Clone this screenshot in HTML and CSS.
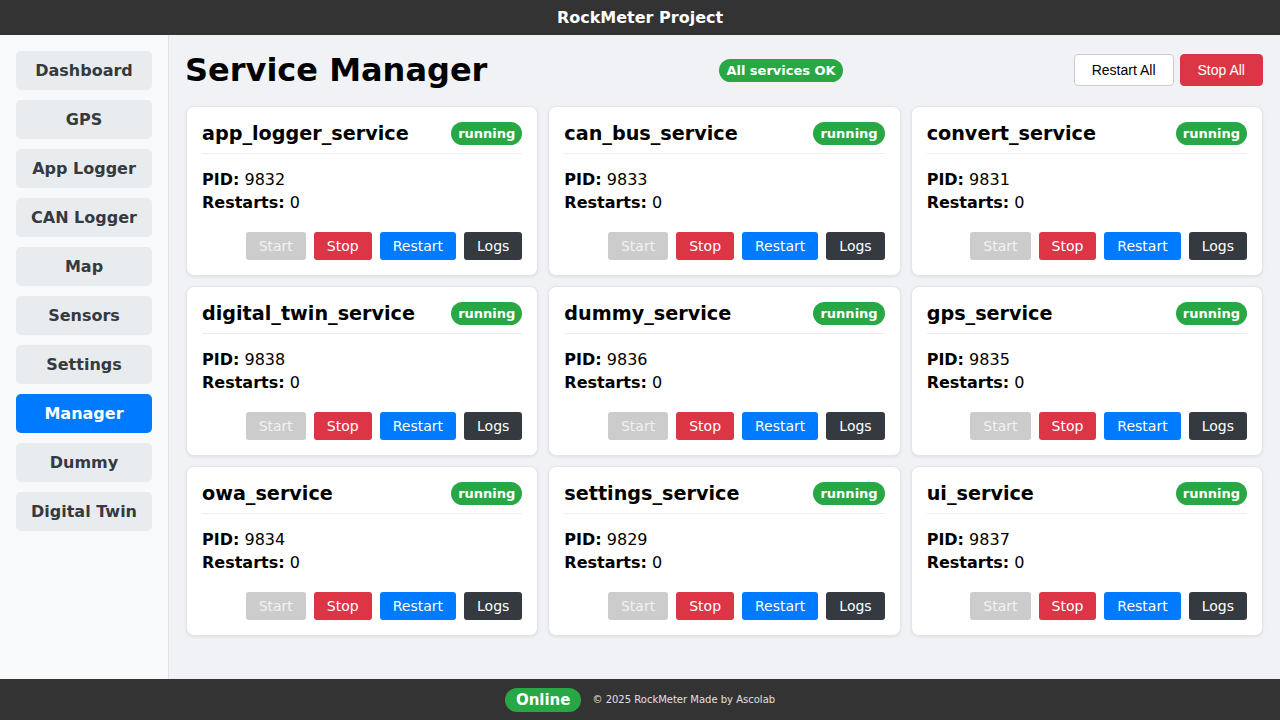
FILE: index.html
```html
<!DOCTYPE html>
<html lang="en">
<head>
<meta charset="utf-8">
<title>RockMeter Project</title>
<link rel="stylesheet" href="styles.css">
</head>
<body>
<header class="topbar">RockMeter Project</header>
<div class="layout">
  <nav class="sidebar">
    <button class="nav-btn">Dashboard</button>
    <button class="nav-btn">GPS</button>
    <button class="nav-btn">App Logger</button>
    <button class="nav-btn">CAN Logger</button>
    <button class="nav-btn">Map</button>
    <button class="nav-btn">Sensors</button>
    <button class="nav-btn">Settings</button>
    <button class="nav-btn active">Manager</button>
    <button class="nav-btn">Dummy</button>
    <button class="nav-btn">Digital Twin</button>
  </nav>
  <main class="main">
    <div class="page-head">
      <h1 class="page-title">Service Manager</h1>
      <span class="pill ok">All services OK</span>
      <div class="head-actions">
        <button class="hbtn light">Restart All</button>
        <button class="hbtn danger">Stop All</button>
      </div>
    </div>
    <div class="grid">
      <div class="card">
        <div class="card-head"><h3 class="card-title">app_logger_service</h3><span class="pill run">running</span></div>
        <div class="card-body"><div><b>PID:</b> 9832</div><div><b>Restarts:</b> 0</div></div>
        <div class="actions"><button class="abtn start">Start</button><button class="abtn stop">Stop</button><button class="abtn restart">Restart</button><button class="abtn logs">Logs</button></div>
      </div>
      <div class="card">
        <div class="card-head"><h3 class="card-title">can_bus_service</h3><span class="pill run">running</span></div>
        <div class="card-body"><div><b>PID:</b> 9833</div><div><b>Restarts:</b> 0</div></div>
        <div class="actions"><button class="abtn start">Start</button><button class="abtn stop">Stop</button><button class="abtn restart">Restart</button><button class="abtn logs">Logs</button></div>
      </div>
      <div class="card">
        <div class="card-head"><h3 class="card-title">convert_service</h3><span class="pill run">running</span></div>
        <div class="card-body"><div><b>PID:</b> 9831</div><div><b>Restarts:</b> 0</div></div>
        <div class="actions"><button class="abtn start">Start</button><button class="abtn stop">Stop</button><button class="abtn restart">Restart</button><button class="abtn logs">Logs</button></div>
      </div>
      <div class="card">
        <div class="card-head"><h3 class="card-title">digital_twin_service</h3><span class="pill run">running</span></div>
        <div class="card-body"><div><b>PID:</b> 9838</div><div><b>Restarts:</b> 0</div></div>
        <div class="actions"><button class="abtn start">Start</button><button class="abtn stop">Stop</button><button class="abtn restart">Restart</button><button class="abtn logs">Logs</button></div>
      </div>
      <div class="card">
        <div class="card-head"><h3 class="card-title">dummy_service</h3><span class="pill run">running</span></div>
        <div class="card-body"><div><b>PID:</b> 9836</div><div><b>Restarts:</b> 0</div></div>
        <div class="actions"><button class="abtn start">Start</button><button class="abtn stop">Stop</button><button class="abtn restart">Restart</button><button class="abtn logs">Logs</button></div>
      </div>
      <div class="card">
        <div class="card-head"><h3 class="card-title">gps_service</h3><span class="pill run">running</span></div>
        <div class="card-body"><div><b>PID:</b> 9835</div><div><b>Restarts:</b> 0</div></div>
        <div class="actions"><button class="abtn start">Start</button><button class="abtn stop">Stop</button><button class="abtn restart">Restart</button><button class="abtn logs">Logs</button></div>
      </div>
      <div class="card">
        <div class="card-head"><h3 class="card-title">owa_service</h3><span class="pill run">running</span></div>
        <div class="card-body"><div><b>PID:</b> 9834</div><div><b>Restarts:</b> 0</div></div>
        <div class="actions"><button class="abtn start">Start</button><button class="abtn stop">Stop</button><button class="abtn restart">Restart</button><button class="abtn logs">Logs</button></div>
      </div>
      <div class="card">
        <div class="card-head"><h3 class="card-title">settings_service</h3><span class="pill run">running</span></div>
        <div class="card-body"><div><b>PID:</b> 9829</div><div><b>Restarts:</b> 0</div></div>
        <div class="actions"><button class="abtn start">Start</button><button class="abtn stop">Stop</button><button class="abtn restart">Restart</button><button class="abtn logs">Logs</button></div>
      </div>
      <div class="card">
        <div class="card-head"><h3 class="card-title">ui_service</h3><span class="pill run">running</span></div>
        <div class="card-body"><div><b>PID:</b> 9837</div><div><b>Restarts:</b> 0</div></div>
        <div class="actions"><button class="abtn start">Start</button><button class="abtn stop">Stop</button><button class="abtn restart">Restart</button><button class="abtn logs">Logs</button></div>
      </div>
    </div>
  </main>
</div>
<footer class="footer">
  <span class="pill online">Online</span>
  <span class="copy">© 2025 RockMeter Made by Ascolab</span>
</footer>
</body>
</html>
```

FILE: styles.css
```css
* { box-sizing: border-box; }
html, body { margin: 0; padding: 0; }
body {
  font-family: "DejaVu Sans", sans-serif;
  height: 100vh;
  display: flex;
  flex-direction: column;
  background: #f0f2f5;
  color: #000;
}
.topbar {
  height: 35px;
  flex: 0 0 35px;
  background: #333;
  color: #fff;
  font-weight: bold;
  font-size: 16px;
  display: flex;
  align-items: center;
  justify-content: center;
}
.layout {
  flex: 1;
  display: flex;
  min-height: 0;
}
.sidebar {
  width: 169px;
  flex: 0 0 169px;
  background: #f8f9fa;
  border-right: 1px solid #dee2e6;
  padding: 16px;
  display: flex;
  flex-direction: column;
  gap: 10px;
}
.nav-btn {
  font-family: "DejaVu Sans", sans-serif;
  font-weight: bold;
  font-size: 16px;
  height: 39px;
  width: 136px;
  border: none;
  border-radius: 5px;
  background: #e9ecef;
  color: #343a40;
  padding: 0;
}
.nav-btn.active {
  background: #007bff;
  color: #fff;
}
.main {
  flex: 1;
  padding: 16px 17px;
  min-width: 0;
}
.page-head {
  display: flex;
  align-items: center;
  justify-content: space-between;
  height: 38px;
  margin-bottom: 17px;
}
.page-title {
  margin: 0 0 0 -1px;
  font-size: 32px;
  font-weight: bold;
  line-height: 38px;
}
.pill {
  display: inline-block;
  color: #fff;
  font-weight: bold;
  background: #28a745;
  border-radius: 12px;
}
.pill.ok, .pill.run {
  font-size: 13px;
  line-height: 17px;
  padding: 3px 7px;
}
.pill.ok { margin-left: 1px; }
.head-actions {
  display: flex;
  gap: 6px;
}
.hbtn {
  font-family: "Liberation Sans", Arial, sans-serif;
  font-size: 14px;
  line-height: 16px;
  padding: 7px 17px;
  border-radius: 4px;
  border: 1px solid #ccc;
}
.hbtn.light { background: #fff; color: #000; }
.hbtn.danger { background: #dc3545; color: #fff; border-color: #dc3545; padding: 7px 17px; }
.grid {
  display: grid;
  grid-template-columns: repeat(3, 1fr);
  column-gap: 10px;
  row-gap: 10px;
}
.card {
  background: #fff;
  border: 1px solid #e3e5e8;
  border-radius: 8px;
  box-shadow: 0 1px 3px rgba(0,0,0,0.08);
  padding: 15px 15px;
}
.card-head {
  display: flex;
  align-items: center;
  justify-content: space-between;
  padding-bottom: 8px;
  border-bottom: 1px solid #eee;
  height: 32px;
}
.card-title {
  margin: 0;
  font-size: 19.2px;
  font-weight: bold;
}
.card-body {
  padding-top: 14px;
  font-size: 16px;
  line-height: 23px;
}
.actions {
  display: flex;
  justify-content: flex-end;
  gap: 8px;
  margin-top: 18px;
}
.abtn {
  font-family: "DejaVu Sans", sans-serif;
  font-size: 14px;
  line-height: 17px;
  height: 28px;
  padding: 0 13px;
  border: none;
  border-radius: 3px;
  color: #fff;
}
.abtn.start { background: #ccc; color: #f2f2f2; }
.abtn.stop { background: #dc3545; }
.abtn.restart { background: #007bff; }
.abtn.logs { background: #343a40; }
.footer {
  height: 41px;
  flex: 0 0 41px;
  background: #333;
  display: flex;
  align-items: center;
  justify-content: center;
  gap: 11px;
}
.pill.online {
  font-size: 15px;
  line-height: 18px;
  padding: 3px 11px;
}
.copy {
  color: #e0e0e0;
  font-size: 10px;
}
```
